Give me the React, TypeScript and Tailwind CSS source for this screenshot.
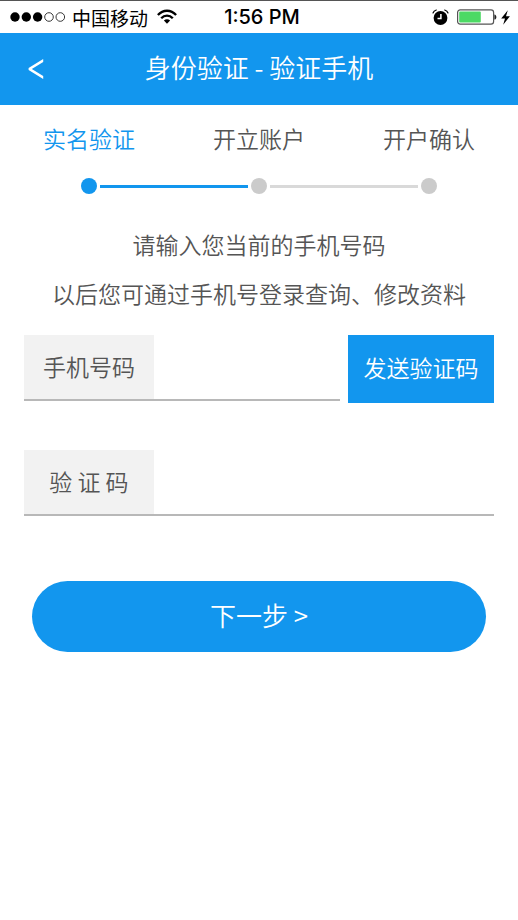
import { useState } from "react";
import clsx from "clsx";

interface Step {
  name: string;
  active: boolean;
}

const steps: Step[] = [
  { name: "实名验证", active: true },
  { name: "开立账户", active: false },
  { name: "开户确认", active: false },
];

const SignalDots = () => (
  <svg width="56" height="12" viewBox="0 0 56 12" aria-hidden="true">
    <circle cx="5" cy="6" r="4.7" />
    <circle cx="16.3" cy="6" r="4.7" />
    <circle cx="27.6" cy="6" r="4.7" />
    <circle cx="39" cy="6" r="4.3" fill="none" stroke="#222" strokeWidth="0.9" />
    <circle cx="50.3" cy="6" r="4.3" fill="none" stroke="#222" strokeWidth="0.9" />
  </svg>
);

const WifiIcon = () => (
  <svg width="20" height="16" viewBox="0 0 20 16" aria-hidden="true">
    <g fill="none" stroke="#000" strokeWidth="2.3">
      <path d="M0.9 6.1C6 0.3 14 0.3 19.1 6.1" />
      <path d="M4.2 9.3C7.5 5.7 12.5 5.7 15.8 9.3" />
    </g>
    <path d="M6.9 11.5C8.7 9.7 11.3 9.7 13.1 11.5L10 14.8Z" />
  </svg>
);

const AlarmIcon = () => (
  <svg width="17" height="17" viewBox="0 0 17 17" aria-hidden="true">
    <circle cx="8.5" cy="9" r="6.9" />
    <g fill="none" stroke="#000" strokeWidth="1.2" strokeLinecap="round">
      <path d="M1 4C1.5 2.6 2.7 1.5 4.3 1" />
      <path d="M16 4C15.5 2.6 14.3 1.5 12.7 1" />
    </g>
    <path d="M8.9 5V9.5H5.5" fill="none" stroke="#fff" strokeWidth="1.5" />
  </svg>
);

const BatteryIcon = () => (
  <svg width="40" height="16" viewBox="0 0 40 16" aria-hidden="true">
    <rect x="0.6" y="0.8" width="36" height="14.4" rx="2.6" fill="#fff" stroke="#555" strokeWidth="1.2" />
    <rect x="2.2" y="2.4" width="21.6" height="11.2" rx="1" fill="#4cd964" />
    <path d="M37.4 5.4C40 5.8 40 10.2 37.4 10.6Z" fill="#222" />
  </svg>
);

const BoltIcon = () => (
  <svg width="9" height="15" viewBox="0 0 9 15" aria-hidden="true">
    <path d="M6.8 0.3L0.2 8.4H4L2.2 14.7L8.9 6.3H5Z" />
  </svg>
);

const StatusBar = () => (
  <div className="grid h-[33px] grid-cols-[1fr_auto_1fr] items-center border-t border-[#555] pl-[10px] pr-2 text-[19px] leading-none text-black">
    <div className="flex items-center">
      <SignalDots />
      <span className="ml-[6px] font-normal">中国移动</span>
      <span className="ml-[9px]">
        <WifiIcon />
      </span>
    </div>
    <time className="pl-1 font-['Inter',sans-serif] text-[20px] font-medium">1:56 PM</time>
    <div className="flex items-center justify-end">
      <AlarmIcon />
      <span className="ml-2">
        <BatteryIcon />
      </span>
      <span className="ml-1">
        <BoltIcon />
      </span>
    </div>
  </div>
);

const Stepper = () => (
  <ol className="grid grid-cols-3 px-1 pt-4">
    {steps.map((step, index) => (
      <li key={step.name} aria-current={step.active ? "step" : undefined}>
        <p
          className={clsx(
            "text-center leading-[34px]",
            step.active ? "text-[#1296ee]" : "text-[#555]"
          )}
        >
          {step.name}
        </p>
        <div className="mt-[23px] flex items-center">
          <span
            className={clsx(
              "h-[3px] flex-1",
              index > 0 && (steps[index - 1].active ? "bg-[#1296ee]" : "bg-[#d9d9d9]")
            )}
          />
          <span
            className={clsx(
              "mx-[3px] size-4 rounded-full",
              step.active ? "bg-[#1296ee]" : "bg-[#cbcbcb]"
            )}
          />
          <span
            className={clsx(
              "h-[3px] flex-1",
              index < steps.length - 1 && (step.active ? "bg-[#1296ee]" : "bg-[#d9d9d9]")
            )}
          />
        </div>
      </li>
    ))}
  </ol>
);

interface FieldProps {
  id: string;
  label: string;
  value: string;
  onChange: (value: string) => void;
}

const Field = ({ id, label, value, onChange }: FieldProps) => (
  <div className="flex h-[66px] min-w-0 flex-1 border-b-2 border-[#b8b8b8]">
    <label
      htmlFor={id}
      className="flex w-[130px] shrink-0 items-center justify-center whitespace-pre bg-[#f2f2f2] pb-0.5"
    >
      {label}
    </label>
    <input
      id={id}
      type="tel"
      value={value}
      onChange={(e) => onChange(e.target.value)}
      className="min-w-0 flex-1 px-3 outline-none"
    />
  </div>
);

const App = () => {
  const [phone, setPhone] = useState("");
  const [code, setCode] = useState("");

  return (
    <div className="min-h-screen bg-white font-['Noto_Sans_CJK_SC',sans-serif] text-[23px] font-[350] text-[#555]">
      <StatusBar />
      <header className="grid h-[72px] grid-cols-[72px_1fr_72px] items-center bg-[#1296ee] text-white">
        <button type="button" aria-label="返回" className="flex h-full items-center justify-center">
          <svg width="16" height="20" viewBox="0 0 16 20" aria-hidden="true">
            <path d="M15.2 0V3L3.8 10L15.2 17V20L0.6 11V9Z" fill="#fff" />
          </svg>
        </button>
        <h1 className="pb-1 text-center text-[26px] leading-none font-[350]">身份验证 - 验证手机</h1>
      </header>
      <main>
        <Stepper />
        <p className="mt-[26px] text-center leading-[49px]">
          请输入您当前的手机号码
          <br />
          以后您可通过手机号登录查询、修改资料
        </p>
        <form className="px-6 pt-[17px]" onSubmit={(e) => e.preventDefault()}>
          <div className="flex gap-2">
            <Field id="phone" label="手机号码" value={phone} onChange={setPhone} />
            <button type="button" className="h-[68px] w-[146px] bg-[#1296ee] pb-1 text-white">
              发送验证码
            </button>
          </div>
          <div className="mt-[47px] flex">
            <Field id="code" label="验 证 码" value={code} onChange={setCode} />
          </div>
          <div className="mt-[65px] px-2">
            <button
              type="submit"
              className="h-[71px] w-full rounded-full bg-[#1296ee] pb-1 text-[26px] leading-none text-white"
            >
              下一步 &gt;
            </button>
          </div>
        </form>
      </main>
    </div>
  );
};

export default App;
